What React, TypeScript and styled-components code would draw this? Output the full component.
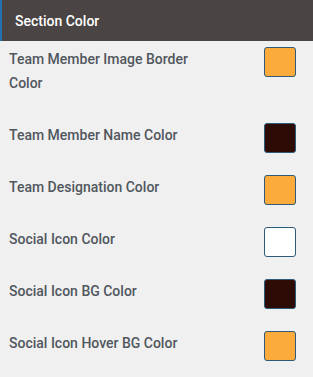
import React from 'react'
import styled, { createGlobalStyle } from 'styled-components'

interface ColorSetting {
  label: string
  color: string
}

const settings: ColorSetting[] = [
  { label: 'Team Member Image Border Color', color: '#fbaa3c' },
  { label: 'Team Member Name Color', color: '#2c0c05' },
  { label: 'Team Designation Color', color: '#fbaa3c' },
  { label: 'Social Icon Color', color: '#ffffff' },
  { label: 'Social Icon BG Color', color: '#2c0c05' },
  { label: 'Social Icon Hover BG Color', color: '#fbaa3c' }
]

const App: React.FC = () => {
  return (
    <>
      <GlobalStyle />
      <Panel>
        <Header>Section Color</Header>
        <List>
          {settings.map(s => (
            <Row key={s.label}>
              <Label>{s.label}</Label>
              <Swatch color={s.color} />
            </Row>
          ))}
        </List>
      </Panel>
    </>
  )
}

const GlobalStyle = createGlobalStyle`
  html, body {
    margin: 0;
    padding: 0;
    background: #f0f0f0;
  }
  body {
    font-family: Roboto, "Liberation Sans", sans-serif;
  }
`
const Panel = styled.div`
  width: 313px;
  min-height: 377px;
  background: #f0f0f0;
`
const Header = styled.div`
  height: 41px;
  display: flex;
  align-items: center;
  padding-left: 13px;
  background: #4a4544;
  border-left: 2px solid #2271b1;
  box-sizing: border-box;
  color: #ffffff;
  font-size: 14px;
  font-weight: 500;
`
const List = styled.div`
  padding: 6px 17px 0 9px;
`
const Row = styled.div`
  display: flex;
  flex-direction: row;
  justify-content: space-between;
  align-items: flex-start;
`
const Label = styled.div`
  width: 196px;
  padding-bottom: 28px;
  font-size: 14px;
  font-weight: 500;
  line-height: 24px;
  color: #50575e;
`
const Swatch = styled.div<{ color: string }>`
  width: 32px;
  height: 30px;
  box-sizing: border-box;
  border: 1px solid #2c5a78;
  border-radius: 3px;
  background-color: ${({ color }) => color};
`

export default App
